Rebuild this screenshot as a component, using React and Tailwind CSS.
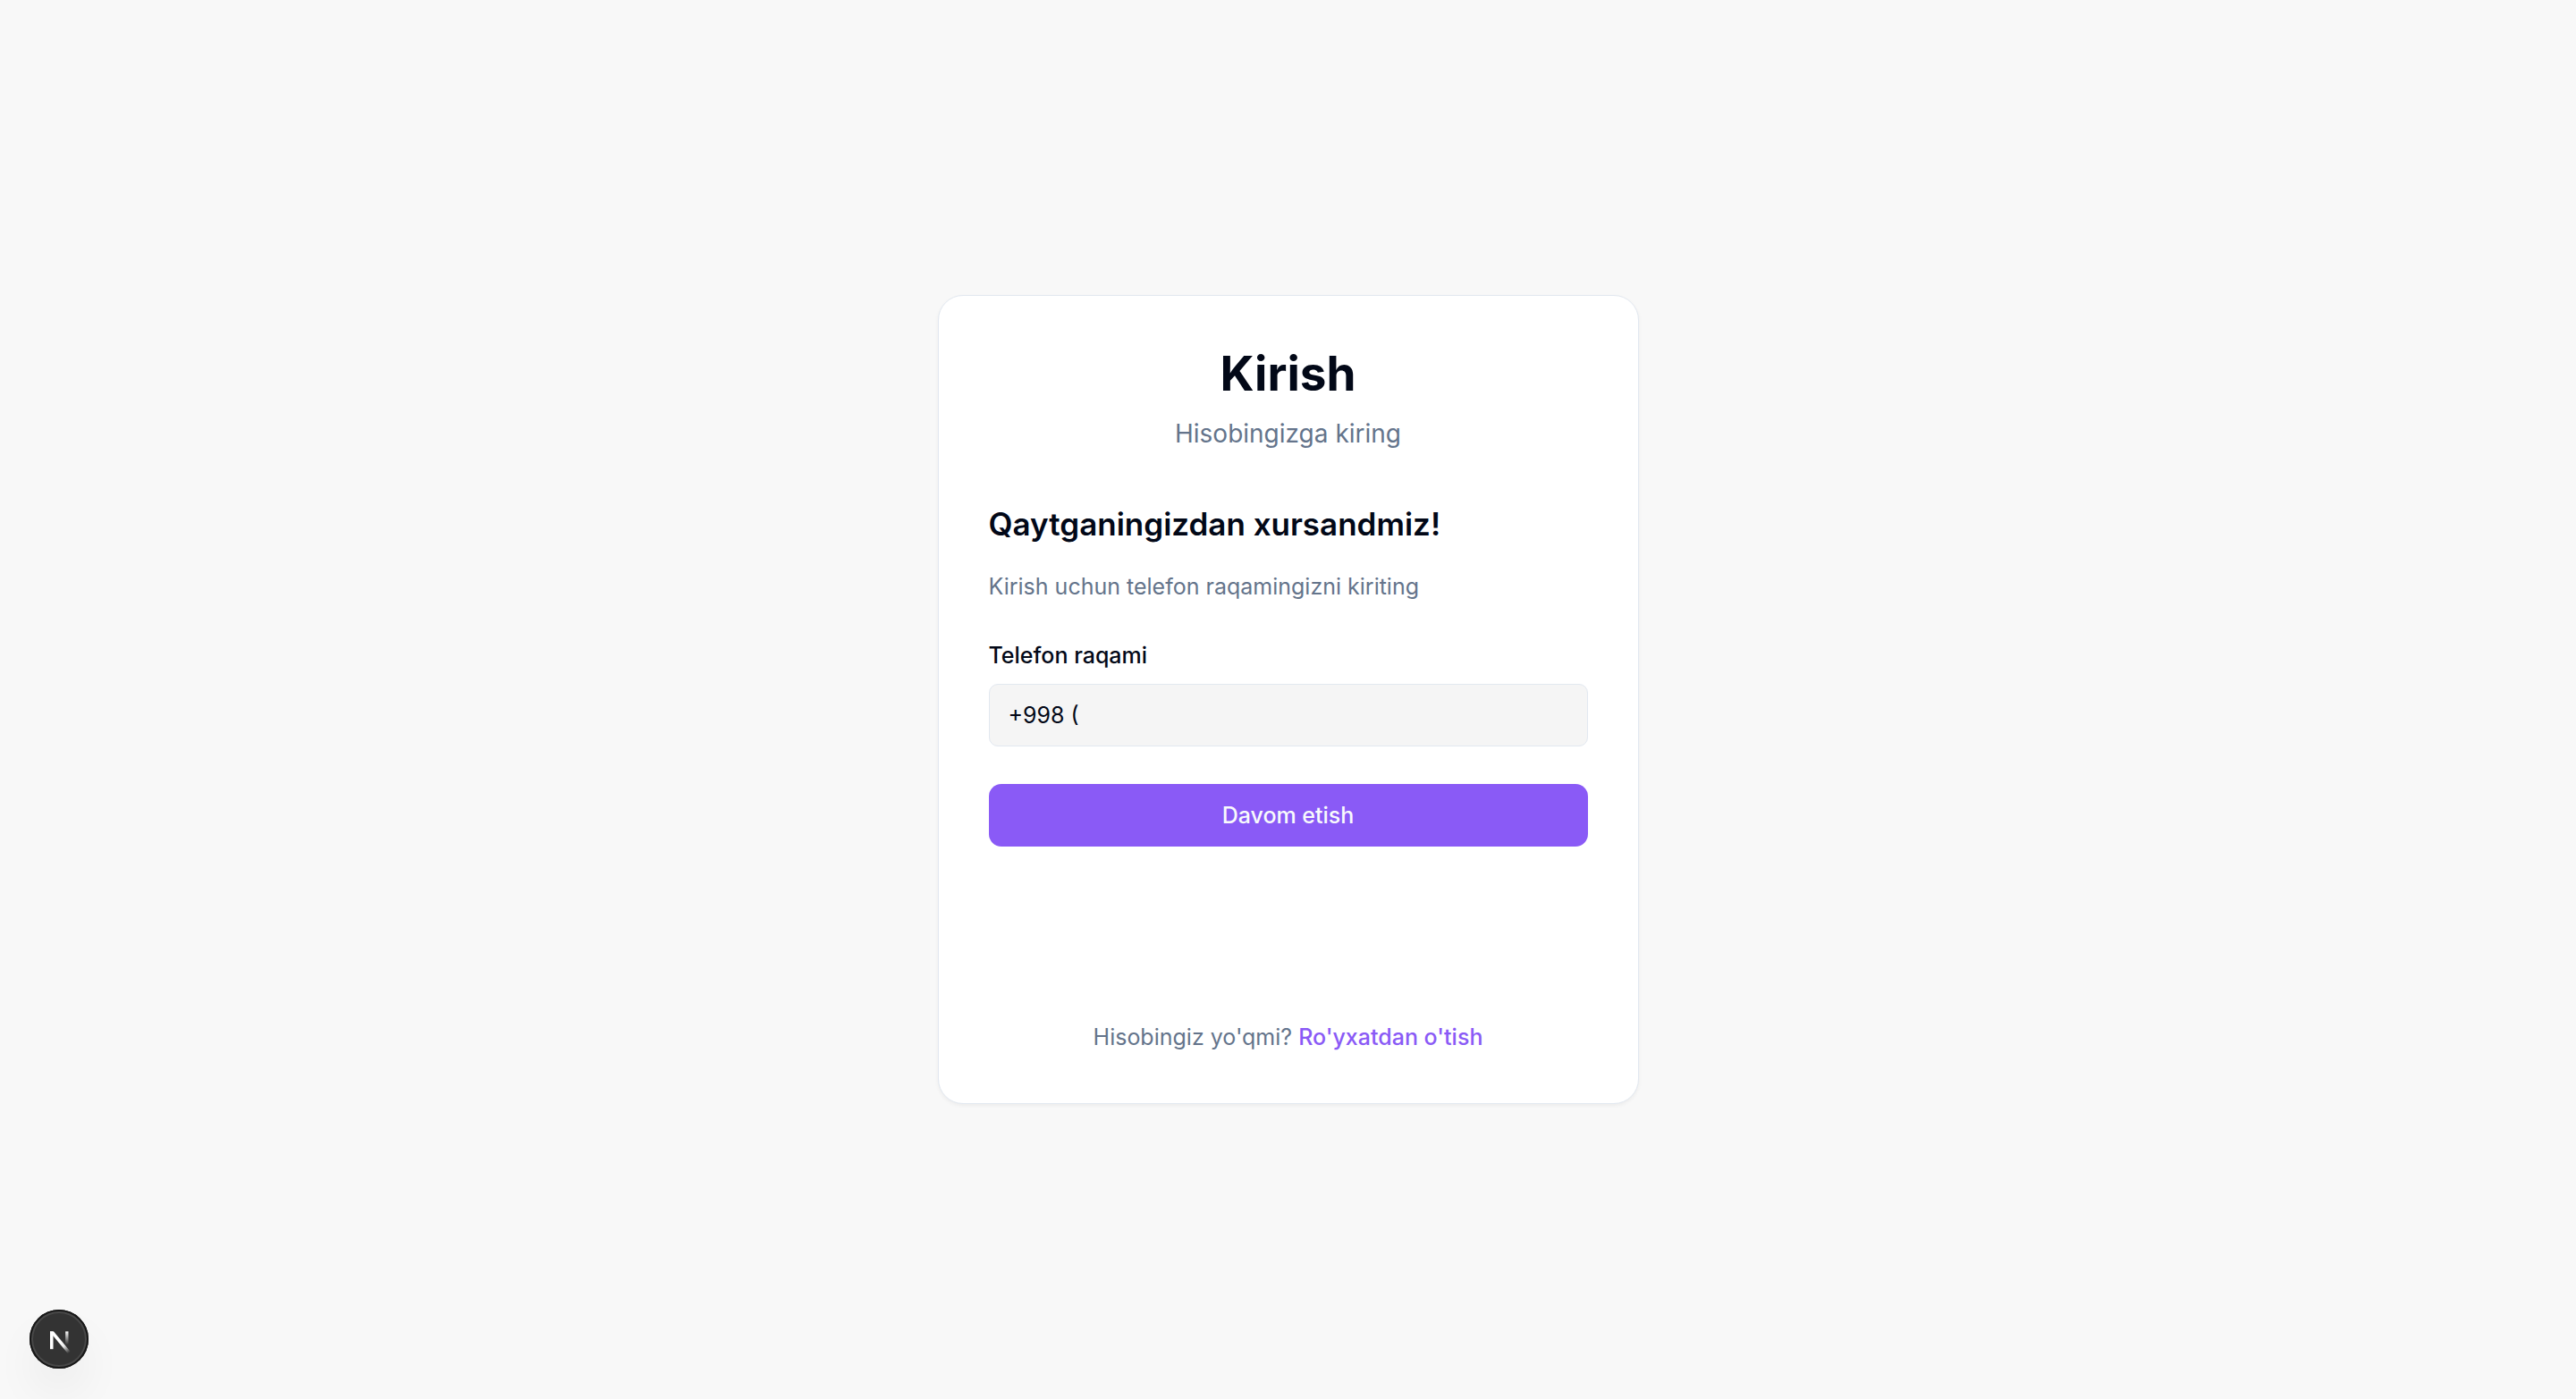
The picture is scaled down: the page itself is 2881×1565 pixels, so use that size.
import { useState } from "react";

function NextBadge() {
  return (
    <button
      type="button"
      aria-label="Open Next.js Dev Tools"
      className="fixed bottom-[34px] left-[33px] flex size-[66px] items-center justify-center rounded-full bg-[#333333] shadow-[inset_0_0_0_2px_#171717,inset_0_0_0_4px_#484848,0_28px_56px_-14px_rgba(0,0,0,0.14)]"
    >
      <svg width="70" height="70" viewBox="0 0 40 40" fill="none" className="shrink-0" aria-hidden="true">
        <defs>
          <linearGradient id="diagonal" x1="21" y1="21.5" x2="26.6" y2="28.6" gradientUnits="userSpaceOnUse">
            <stop stopColor="white" />
            <stop offset="0.4" stopColor="white" stopOpacity="0.9" />
            <stop offset="1" stopColor="white" stopOpacity="0" />
          </linearGradient>
          <linearGradient id="stem" x1="25" y1="15" x2="25" y2="23.6" gradientUnits="userSpaceOnUse">
            <stop stopColor="white" />
            <stop offset="1" stopColor="white" stopOpacity="0" />
          </linearGradient>
        </defs>
        <path d="M14.3 15.1H16.6L27.4 28.2L25.8 29.4L14.3 15.6Z" fill="url(#diagonal)" />
        <path d="M14.3 15.1H16.3V26.4H14.3Z" fill="white" />
        <path d="M24.1 15.1H26V23.6H24.1Z" fill="url(#stem)" />
      </svg>
    </button>
  );
}

export default function App() {
  const [phone, setPhone] = useState("+998 (");

  return (
    <main className="flex min-h-screen items-center justify-center bg-[#f8f8f8] p-7 font-['Inter',sans-serif] text-[#020817]">
      <div className="w-full max-w-[784px] rounded-[28px] border border-[#e2e8f0] bg-white p-14 shadow-[0_2px_4px_0_rgba(0,0,0,0.05)]">
        <header className="mb-14 text-center">
          <h1 className="mb-3.5 text-[53px] leading-[63px] font-bold">Kirish</h1>
          <p className="text-[28px] leading-[42px] text-[#64748b]">Hisobingizga kiring</p>
        </header>

        <form className="min-h-[525px]" onSubmit={(event) => event.preventDefault()}>
          <h2 className="mb-7 text-[35px] leading-[49px] font-semibold">Qaytganingizdan xursandmiz!</h2>
          <p className="mb-[42px] text-[25px] leading-[35px] text-[#64748b]">
            Kirish uchun telefon raqamingizni kiriting
          </p>
          <label htmlFor="phone" className="mb-3.5 block text-[25px] leading-[35px] font-medium">
            Telefon raqami
          </label>
          <input
            id="phone"
            type="tel"
            value={phone}
            onChange={(event) => setPhone(event.target.value)}
            className="mb-[42px] block h-[70px] w-full rounded-[10px] border border-[#e2e8f0] bg-[#f5f5f5] px-[21px] text-[25px] outline-none"
          />
          <button
            type="submit"
            className="block h-[70px] w-full rounded-[14px] bg-[#8a5af6] text-[25px] leading-[35px] font-medium text-[#f8fafc]"
          >
            Davom etish
          </button>
        </form>

        <p className="mt-14 text-center text-[25px] leading-[35px] text-[#64748b]">
          Hisobingiz yo'qmi?{" "}
          <a href="#register" className="font-medium text-[#8a5af6]">
            Ro'yxatdan o'tish
          </a>
        </p>
      </div>
      <NextBadge />
    </main>
  );
}
